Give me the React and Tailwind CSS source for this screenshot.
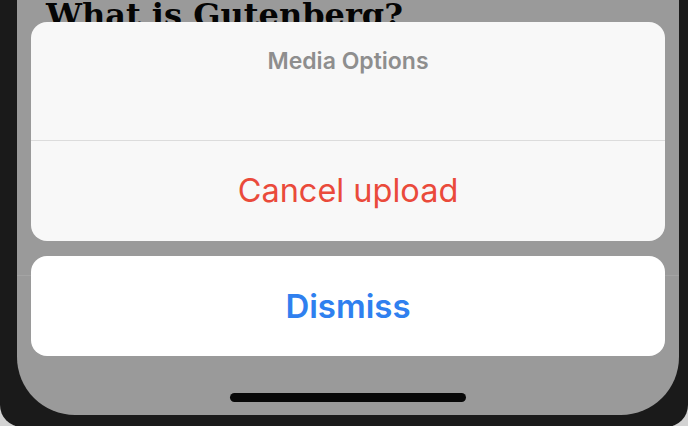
export default function App() {
  return (
    <div className="w-[688px] h-[426px] overflow-hidden bg-[#d2d2d2]">
      <div className="h-[427px] bg-[#1a1a1a] rounded-b-[22px] pl-[17px] pr-[9px] pb-[12px]">
        <div className="relative h-full bg-[#9a9a9a] rounded-b-[58px] overflow-hidden">
          {/* page content behind the sheet */}
          <h1
            className="pl-[29px] text-[32px] leading-[34px] font-bold text-[#050505] -mt-[2px]"
            style={{ fontFamily: '"DejaVu Serif", serif' }}
          >
            What is Gutenberg?
          </h1>
          <div className="mt-[243px] h-px bg-[#a4a4a4]" />

          {/* action sheet */}
          <div
            className="absolute left-[14px] right-[14px] top-[22px] flex flex-col gap-[15px]"
            style={{ fontFamily: 'Inter, "Noto Sans", sans-serif' }}
          >
            <div className="rounded-[16px] bg-[#f8f8f8] overflow-hidden">
              <div className="h-[118px] flex justify-center pt-[24px]">
                <span className="text-[23px] leading-[30px] font-semibold text-[#8e8e8e]">Media Options</span>
              </div>
              <div className="h-px bg-[#dcdcdc]" />
              <div className="h-[100px] flex items-center justify-center">
                <span className="text-[32.5px] leading-[38px] text-[#ea4a3b]">Cancel upload</span>
              </div>
            </div>
            <div className="h-[100px] rounded-[16px] bg-white flex items-center justify-center">
              <span className="text-[33px] leading-[38px] font-semibold text-[#2f80ef]">Dismiss</span>
            </div>
          </div>

          {/* home indicator */}
          <div className="absolute left-[213px] top-[393px] w-[236px] h-[9px] rounded-full bg-[#080808]" />
        </div>
      </div>
    </div>
  );
}
